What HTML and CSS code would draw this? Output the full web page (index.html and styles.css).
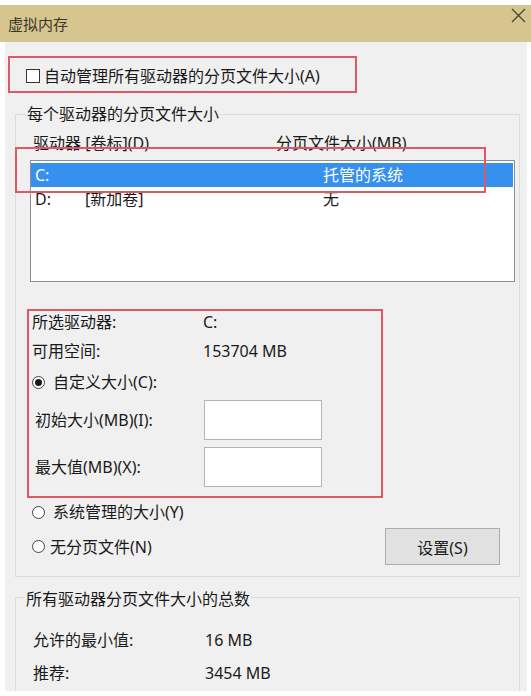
FILE: index.html
```html
<!DOCTYPE html>
<html lang="zh-CN">
<head>
    <meta charset="UTF-8">
    <meta name="viewport" content="width=device-width, initial-scale=1.0">
    <title>虚拟内存</title>
    <link rel="stylesheet" href="styles.css">
</head>
<body>
    <div class="titlebar">
        <span class="title">虚拟内存</span>
        <svg class="close" width="15" height="15" viewBox="0 0 15 15">
            <path d="M1 1 L14 14 M14 1 L1 14" stroke="#4a4636" stroke-width="1.3" fill="none"/>
        </svg>
    </div>

    <div class="dialog">
        <div class="mark auto-box">
            <div class="check-row"><span class="checkbox"></span>自动管理所有驱动器的分页文件大小(A)</div>
        </div>

        <div class="group drives">
            <div class="group-title">每个驱动器的分页文件大小</div>
            <div class="list-head">
                <span class="col-one">驱动器 [卷标](D)</span>
                <span>分页文件大小(MB)</span>
            </div>
            <div class="listbox">
                <div class="row selected">
                    <span class="cell-drive">C:</span>
                    <span>托管的系统</span>
                </div>
                <div class="row">
                    <span class="cell-drive"><span class="letter">D:</span>[新加卷]</span>
                    <span>无</span>
                </div>
            </div>
            <div class="mark list-mark"></div>

            <div class="mark custom-box">
                <div class="info"><span class="info-label">所选驱动器:</span><span>C:</span></div>
                <div class="info second"><span class="info-label">可用空间:</span><span>153704 MB</span></div>
                <div class="radio-row custom"><span class="radio on"></span>自定义大小(C):</div>
                <div class="size-row first">
                    <span class="size-label">初始大小(MB)(I):</span>
                    <span class="field"></span>
                </div>
                <div class="size-row">
                    <span class="size-label">最大值(MB)(X):</span>
                    <span class="field"></span>
                </div>
            </div>

            <div class="radio-row system"><span class="radio"></span>系统管理的大小(Y)</div>
            <div class="bottom-row">
                <div class="radio-row none"><span class="radio"></span>无分页文件(N)</div>
                <button class="btn">设置(S)</button>
            </div>
        </div>

        <div class="group totals">
            <div class="group-title">所有驱动器分页文件大小的总数</div>
            <div class="info total-first"><span class="total-label">允许的最小值:</span><span>16 MB</span></div>
            <div class="info total-second"><span class="total-label">推荐:</span><span>3454 MB</span></div>
        </div>
    </div>
</body>
</html>
```

FILE: styles.css
```css
body {
    margin: 0;
    width: 531px;
    height: 696px;
    background-color: #ffffff;
    font-family: "Noto Sans", "Noto Sans CJK SC", sans-serif;
    font-size: 16px;
    line-height: 20px;
    color: #1a1a1a;
    overflow: hidden;
}

.titlebar {
    margin-top: 5px;
    height: 37px;
    background-color: #d6c58f;
    display: flex;
    align-items: center;
    justify-content: space-between;
}

.titlebar .title {
    margin-left: 8px;
    font-size: 15px;
    color: #3a3628;
}

.titlebar .close {
    align-self: flex-start;
    margin-top: 3px;
    margin-right: 5px;
}

.dialog {
    margin-left: 5px;
    width: 522px;
    height: 649px;
    background-color: #f0f0f0;
    overflow: hidden;
    padding-top: 14px;
    box-sizing: border-box;
}

/* red annotation boxes */
.mark {
    border: 2px solid #dc5a66;
    box-sizing: border-box;
}

.auto-box {
    margin-left: 3px;
    width: 349px;
    height: 37px;
    display: flex;
    align-items: center;
    padding-left: 16px;
}

.check-row {
    display: flex;
    align-items: center;
    margin-top: 2px;
}

.checkbox {
    width: 12px;
    height: 12px;
    border: 1px solid #333;
    background-color: #fff;
    margin-right: 4px;
}

.group {
    position: relative;
    margin-left: 10px;
    width: 505px;
    box-sizing: border-box;
    border: 1px solid #dcdcdc;
}

.group-title {
    display: block;
    width: fit-content;
    height: 20px;
    margin-top: -11px;
    margin-left: 10px;
    padding: 0 1px;
    background-color: #f0f0f0;
}

.drives {
    margin-top: 21px;
    padding-bottom: 11px;
}

.list-head {
    display: flex;
    margin-top: 9px;
    padding-left: 17px;
}

.list-head .col-one {
    width: 243px;
}

.listbox {
    margin-top: 7px;
    margin-left: 14px;
    width: 485px;
    height: 122px;
    box-sizing: border-box;
    border: 1px solid #8c9099;
    background-color: #fff;
    padding: 2px 1px 0 0;
}

.listbox .row {
    display: flex;
    height: 24px;
    align-items: center;
    padding-left: 4px;
}

.listbox .row.selected {
    background-color: #3590ee;
    color: #fff;
}

.cell-drive {
    width: 288px;
    display: flex;
}

.cell-drive .letter {
    width: 50px;
}

.list-mark {
    position: absolute;
    left: -1px;
    top: 32px;
    width: 471px;
    height: 46px;
}

.custom-box {
    margin-top: 27px;
    margin-left: 11px;
    width: 356px;
    height: 189px;
    padding: 1px 0 0 3px;
}

.info {
    display: flex;
}

.info .info-label {
    width: 171px;
}

.info.second {
    margin-top: 9px;
}

.radio-row {
    display: flex;
    align-items: center;
}

.radio {
    width: 11px;
    height: 11px;
    border: 1px solid #444;
    border-radius: 50%;
    background-color: #fff;
    margin-right: 8px;
    position: relative;
}

.radio.on::after {
    content: "";
    position: absolute;
    left: 2px;
    top: 2px;
    width: 7px;
    height: 7px;
    border-radius: 50%;
    background-color: #1a1a1a;
}

.radio-row.custom {
    margin-top: 11px;
}

.size-row {
    display: flex;
    align-items: center;
    margin-top: 7px;
    padding-left: 3px;
}

.size-row.first {
    margin-top: 8px;
}

.size-label {
    width: 169px;
}

.field {
    width: 118px;
    height: 40px;
    box-sizing: border-box;
    border: 1px solid #b4b4b4;
    background-color: #fff;
}

.radio-row.system {
    margin-top: 4px;
    margin-left: 16px;
}

.bottom-row {
    display: flex;
    align-items: center;
    justify-content: space-between;
    margin-top: 6px;
    margin-left: 16px;
    margin-right: 19px;
}

.radio-row.none .radio {
    margin-right: 5px;
}

.btn {
    width: 115px;
    height: 37px;
    border: 1px solid #adadad;
    background-color: #e1e1e1;
    font-family: inherit;
    font-size: 16px;
    color: #1a1a1a;
    padding: 0;
}

.totals {
    margin-top: 20px;
    height: 200px;
}

.totals .group-title {
    margin-left: 9px;
    margin-top: -9px;
}

.total-label {
    width: 172px;
    padding-left: 17px;
}

.total-first {
    margin-top: 21px;
}

.total-second {
    margin-top: 13px;
}
```
